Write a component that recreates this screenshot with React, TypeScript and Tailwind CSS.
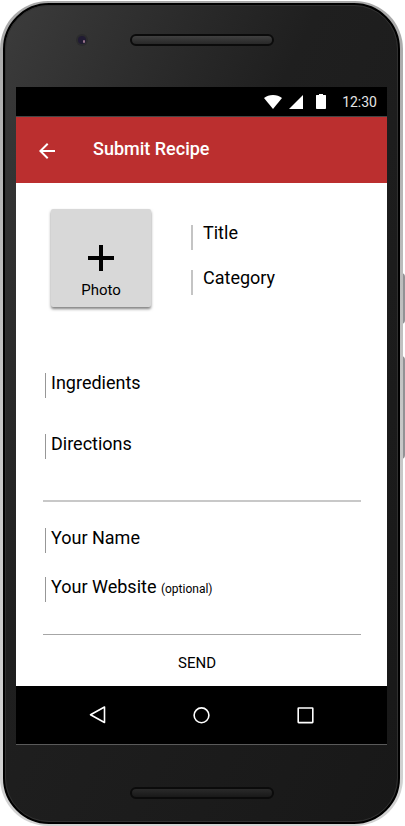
import React from "react";

type FieldProps = {
  id: string;
  label: string;
  note?: string;
  type?: string;
  wide?: boolean;
};

function Field({ id, label, note, type = "text", wide = false }: FieldProps) {
  return (
    <div
      className={
        wide
          ? "flex h-[25px] items-start border-l-2 border-[#c4c4c4] pl-[10px] leading-4"
          : "flex h-[25px] items-start border-l border-[#979797] pl-[5px] leading-5"
      }
    >
      <label htmlFor={id} className="shrink-0 text-[18px]">
        {label}
        {note && (
          <>
            {" "}
            <span className="text-[12px]">{note}</span>
          </>
        )}
      </label>
      <input
        id={id}
        type={type}
        className="ml-1 h-5 w-0 min-w-0 flex-1 bg-transparent text-[18px] outline-none"
      />
    </div>
  );
}

function SpeakerSlot({ dim = false }: { dim?: boolean }) {
  return (
    <div
      className={
        dim
          ? "h-3 w-36 rounded-full border-2 border-[#0b0b0b] bg-gradient-to-b from-[#2a2a2a] to-[#191919]"
          : "h-3 w-36 rounded-full border-2 border-[#0b0b0b] bg-gradient-to-b from-[#404040] to-[#282828]"
      }
    />
  );
}

function StatusBar() {
  return (
    <div className="flex h-[30px] items-center justify-end border-b border-[#454545] bg-black pr-[10px] text-[#e4e4e4]">
      <svg width="18" height="14" viewBox="0 0 18 14" fill="#fff" aria-hidden="true">
        <path d="M9 14 0 3C2.400 1 5.500 0 9 0s6.600 1 9 3z" />
      </svg>
      <svg className="ml-[7px]" width="14" height="14" viewBox="0 0 14 14" fill="#fff" aria-hidden="true">
        <path d="M14 0v14H0z" />
      </svg>
      <svg className="ml-[13px]" width="10" height="15" viewBox="0 0 10 15" fill="#fff" aria-hidden="true">
        <path d="M3 0h4v1h2.500c.3 0 .5.200.5.500V14c0 .6-.4 1-1 1H1c-.6 0-1-.4-1-1V1.500c0-.3.200-.5.500-.5H3z" />
      </svg>
      <span className="ml-4 text-sm leading-4">12:30</span>
    </div>
  );
}

function NavBar() {
  const button = "flex h-6 w-6 items-center justify-center";
  return (
    <nav className="flex h-[59px] items-center justify-center gap-20 border-b border-[#5a5a5a] bg-black">
      <button type="button" aria-label="Back" className={button}>
        <svg width="24" height="24" viewBox="0 0 24 24" fill="none" stroke="#fff" strokeWidth="1.600" strokeLinejoin="round">
          <path d="M18.500 4v15.500L4.500 11.700z" />
        </svg>
      </button>
      <button type="button" aria-label="Home" className={button}>
        <svg width="24" height="24" viewBox="0 0 24 24" fill="none" stroke="#fff" strokeWidth="1.600">
          <circle cx="11.500" cy="12.300" r="7.400" />
        </svg>
      </button>
      <button type="button" aria-label="Recent apps" className={button}>
        <svg width="24" height="24" viewBox="0 0 24 24" fill="none" stroke="#fff" strokeWidth="1.600" strokeLinejoin="round">
          <rect x="4.200" y="5" width="14.600" height="14.600" rx="0.500" />
        </svg>
      </button>
    </nav>
  );
}

export default function App() {
  return (
    <div className="relative bg-white pr-[2px] pt-px font-['Roboto',sans-serif] text-black">
      {/* Power and volume keys on the right edge */}
      <div className="absolute right-0 top-[273px] h-[51px] w-1 rounded-r-sm bg-[#929295]" />
      <div className="absolute right-0 top-[356px] h-[103px] w-1 rounded-r-sm bg-[#929295]" />

      <div className="relative rounded-[48px] bg-gradient-to-b from-[#a8a8a8] via-[#c6c6c6] to-[#d2d2d2] px-[3px] pb-[2px] pt-[2px]">
        <div className="rounded-[46px] border-2 border-black bg-gradient-to-br from-[#3c3c3c] via-[#1f1f1f] via-40% to-[#181818]">
          <div className="rounded-[44px] border border-[#303030] px-[10px]">
            <div className="relative flex h-[81px] justify-center pt-7">
              <div className="absolute left-[60px] top-7 flex h-3 w-3 items-center justify-center rounded-full bg-[#2b2b2d]">
                <div className="flex h-2 w-2 items-end justify-end rounded-full bg-[#211b33] p-px">
                  <div className="h-[3px] w-[2px] rounded-full bg-[#99748c]" />
                </div>
              </div>
              <SpeakerSlot />
            </div>

            <StatusBar />
            <header className="flex h-[66px] items-center bg-[#bb2f2f] pl-[19px] text-white">
              <button type="button" aria-label="Go back" className="h-6 w-6">
                <svg width="24" height="24" viewBox="0 0 24 24" fill="#fff">
                  <path d="M20 12v2H7.830l5.590 5.590L12 21l-8-8 8-8 1.410 1.410L7.830 12z" />
                </svg>
              </button>
              <h1 className="ml-[34px] pb-[2px] text-lg font-medium leading-5">Submit Recipe</h1>
            </header>

            <form className="bg-white pl-[27px] pr-[26px] pt-[26px]" onSubmit={(e) => e.preventDefault()}>
              <div className="flex gap-10 pl-2">
                <button
                  type="button"
                  className="flex h-[98px] w-[100px] shrink-0 flex-col items-center rounded-[2px] bg-[#d8d8d8] pt-9 shadow-[0_2px_3px_rgba(0,0,0,0.5)]"
                >
                  <svg width="26" height="26" viewBox="0 0 26 26" fill="#000" aria-hidden="true">
                    <path d="M11 0h4v11h11v4H15v11h-4V15H0v-4h11z" />
                  </svg>
                  <span className="mt-[11px] text-[15px] leading-4">Photo</span>
                </button>
                <div className="flex min-w-0 flex-1 flex-col gap-5 pt-4">
                  <Field id="title" label="Title" wide />
                  <Field id="category" label="Category" wide />
                </div>
              </div>

              <div className="mt-[66px] flex flex-col gap-9 pl-[2px]">
                <Field id="ingredients" label="Ingredients" />
                <Field id="directions" label="Directions" />
              </div>

              <hr className="mt-[41px] border-t-2 border-[#c8c8c8]" />

              <div className="mt-[26px] flex flex-col gap-6 pl-[2px]">
                <Field id="name" label="Your Name" />
                <Field id="website" label="Your Website" note="(optional)" type="url" />
              </div>

              <hr className="mt-8 border-[#a6a6a6]" />

              <button type="submit" className="flex h-[51px] w-full items-center justify-center pb-px pr-[10px] pt-[6px] text-[15px] leading-4">
                SEND
              </button>
            </form>

            <NavBar />

            <div className="flex h-[76px] justify-center pt-[42px]">
              <SpeakerSlot dim />
            </div>
          </div>
        </div>
      </div>
    </div>
  );
}
